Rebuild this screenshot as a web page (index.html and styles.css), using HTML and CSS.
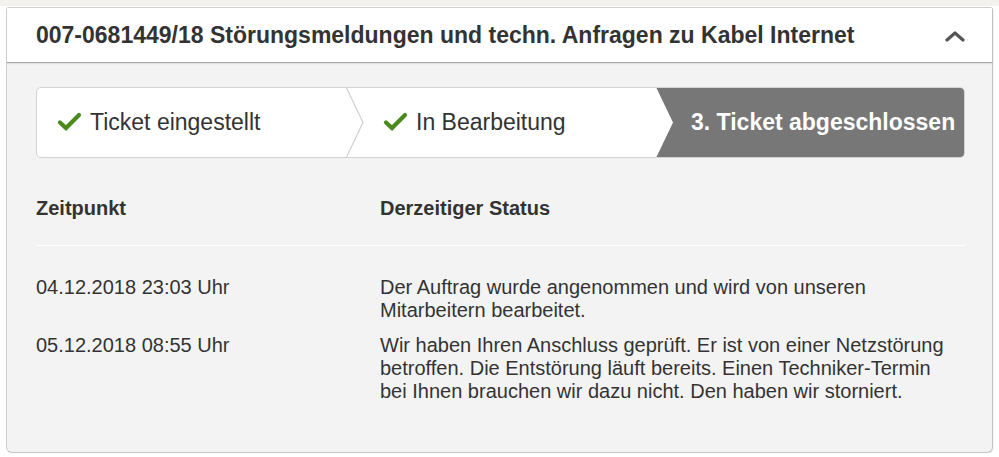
FILE: index.html
```html
<!DOCTYPE html>
<html lang="de">
<head>
<meta charset="utf-8">
<link rel="stylesheet" href="styles.css">
</head>
<body>
<div class="topstrip"></div>
<section class="card">
  <header class="card-head">
    <h2 class="title">007-0681449/18 Störungsmeldungen und techn. Anfragen zu Kabel Internet</h2>
    <svg class="chev" width="20" height="12" viewBox="0 0 20 12"><polyline points="2,10 10,3 18,10" fill="none" stroke="#555" stroke-width="3.2" stroke-linecap="round" stroke-linejoin="round"/></svg>
  </header>
  <div class="card-body">
    <div class="steps">
      <div class="step s1">
        <svg class="check" width="25" height="20" viewBox="0 0 25 20"><polyline points="3,10.5 9,16 22,3" fill="none" stroke="#4b8b1d" stroke-width="4.2" stroke-linecap="round" stroke-linejoin="miter"/></svg>
        <span>Ticket eingestellt</span>
      </div>
      <svg class="sep" width="18" height="71" viewBox="0 0 18 71" preserveAspectRatio="none"><polyline points="0.5,0 17,35.5 0.5,71" fill="none" stroke="#cfcfcf" stroke-width="1.2"/></svg>
      <div class="step s2">
        <svg class="check" width="25" height="20" viewBox="0 0 25 20"><polyline points="3,10.5 9,16 22,3" fill="none" stroke="#4b8b1d" stroke-width="4.2" stroke-linecap="round" stroke-linejoin="miter"/></svg>
        <span>In Bearbeitung</span>
      </div>
      <div class="step s3"><span>3. Ticket abgeschlossen</span></div>
    </div>

    <div class="table">
      <div class="thead">
        <div class="c1">Zeitpunkt</div>
        <div class="c2">Derzeitiger Status</div>
      </div>
      <div class="row">
        <div class="c1">04.12.2018 23:03 Uhr</div>
        <div class="c2">Der Auftrag wurde angenommen und wird von unseren Mitarbeitern bearbeitet.</div>
      </div>
      <div class="row">
        <div class="c1">05.12.2018 08:55 Uhr</div>
        <div class="c2">Wir haben Ihren Anschluss geprüft. Er ist von einer Netzstörung betroffen. Die Entstörung läuft bereits. Einen Techniker-Termin bei Ihnen brauchen wir dazu nicht. Den haben wir storniert.</div>
      </div>
    </div>
  </div>
</section>
</body>
</html>
```

FILE: styles.css
```css
html, body {
  margin: 0;
  padding: 0;
  background: #ffffff;
  font-family: "Liberation Sans", Arial, Helvetica, sans-serif;
  color: #333;
}
.topstrip {
  height: 6px;
  background: #f3f2ef;
}
.card {
  margin: 1px 6px 0 6px;
  width: 985px;
  border: 1px solid #cfcfcf;
  border-right-color: #c4c4c4;
  border-bottom-color: #c4c4c4;
  border-radius: 3px 3px 6px 6px;
  background: #f3f3f3;
  box-shadow: 1px 1px 1px rgba(0,0,0,0.06);
}
.card-head {
  display: flex;
  align-items: center;
  justify-content: space-between;
  height: 54px;
  padding: 0 27px 0 29px;
  background: #fff;
  border-bottom: 1px solid #a9a9a9;
  box-shadow: 0 1px 1px rgba(0,0,0,0.08);
}
.title {
  margin: 0;
  font-size: 23px;
  font-weight: bold;
  color: #333;
  white-space: nowrap;
}
.chev {
  margin-top: 2px;
}
.card-body {
  padding: 24px 27px 49px 29px;
}
.steps {
  display: flex;
  height: 71px;
  box-sizing: border-box;
  border: 1px solid #d2d2d2;
  border-radius: 5px;
  background: #fff;
  overflow: hidden;
}
.step {
  display: flex;
  align-items: center;
  font-size: 23px;
  color: #333;
  white-space: nowrap;
}
.s1 {
  width: 309px;
  padding-left: 20px;
  box-sizing: border-box;
}
.sep {
  flex: none;
  height: 100%;
  width: 18px;
}
.s2 {
  width: 292px;
  padding-left: 19px;
  box-sizing: border-box;
}
.check {
  flex: none;
  margin-right: 8px;
  margin-top: -2px;
}
.s3 {
  flex: 1;
  background: #777;
  color: #fff;
  font-weight: bold;
  padding-left: 35px;
  margin: -1px -1px -1px 0;
  clip-path: polygon(0 0, 100% 0, 100% 100%, 0 100%, 17px 50%);
  border-radius: 0 5px 5px 0;
}
.thead {
  display: flex;
  padding-top: 38px;
  padding-bottom: 25px;
  border-bottom: 1px solid #ffffff;
  font-weight: bold;
  font-size: 20px;
  line-height: 24px;
  color: #333;
}
.row {
  display: flex;
  font-size: 20px;
  line-height: 23px;
  color: #333;
}
.row + .row {
  margin-top: 12px;
}
.thead + .row {
  margin-top: 30px;
}
.c1 {
  width: 344px;
  flex: none;
}
.c2 {
  flex: 1;
  padding-right: 15px;
}
```
